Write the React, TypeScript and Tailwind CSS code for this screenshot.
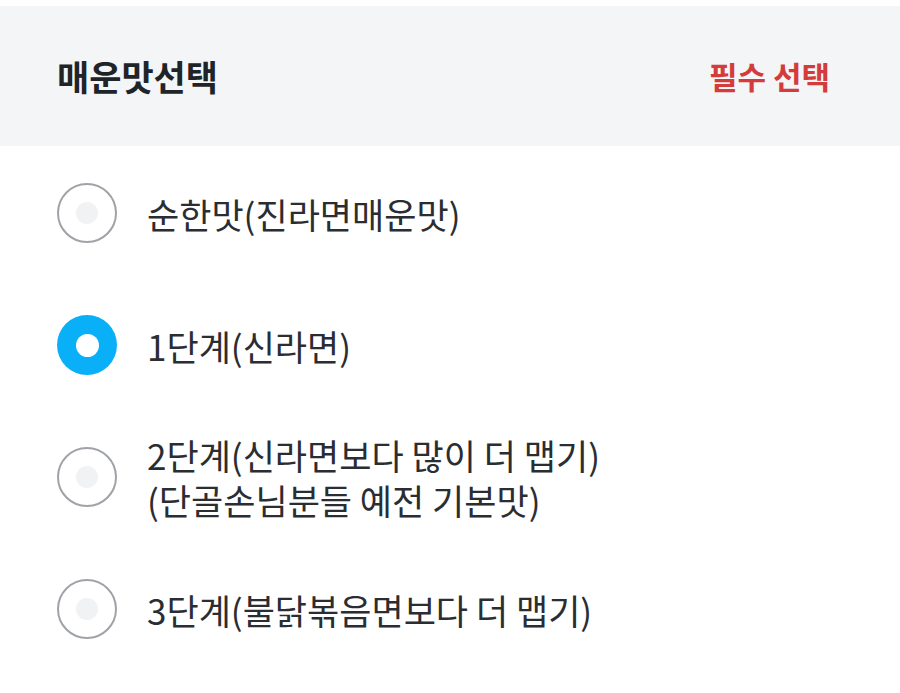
import React from "react";

const options = [
  { lines: ["순한맛(진라면매운맛)"], selected: false },
  { lines: ["1단계(신라면)"], selected: true },
  { lines: ["2단계(신라면보다 많이 더 맵기)", "(단골손님분들 예전 기본맛)"], selected: false },
  { lines: ["3단계(불닭볶음면보다 더 맵기)"], selected: false },
];

function Radio({ selected }: { selected: boolean }) {
  if (selected) {
    return (
      <div className="w-[60px] h-[60px] rounded-full bg-[#0ab0f7] flex items-center justify-center shrink-0">
        <div className="w-[23px] h-[23px] rounded-full bg-white" />
      </div>
    );
  }
  return (
    <div className="w-[60px] h-[60px] rounded-full border-2 border-[#9fa3a7] bg-white flex items-center justify-center shrink-0">
      <div className="w-[22px] h-[22px] rounded-full bg-[#f1f2f4]" />
    </div>
  );
}

export default function App() {
  return (
    <div
      className="w-[900px] h-[693px] bg-white overflow-hidden"
      style={{ fontFamily: '"Noto Sans CJK KR", "Noto Sans", sans-serif' }}
    >
      <div className="h-[6px]" />
      <div className="h-[140px] bg-[#f3f5f7] flex items-center justify-between pl-[57px] pr-[70px]">
        <span className="text-[35px] font-bold text-[#1f2429]">매운맛선택</span>
        <span className="text-[31px] font-bold text-[#d43c3c]">필수 선택</span>
      </div>
      <div className="h-px" />
      <div className="flex flex-col">
        {options.map((o, i) => (
          <div key={i} className="h-[132px] flex items-center pl-[57px] gap-[30px]">
            <Radio selected={o.selected} />
            <div className="text-[35px] leading-[45px] text-[#2a2d31]">
              {o.lines.map((l, j) => (
                <div key={j}>{l}</div>
              ))}
            </div>
          </div>
        ))}
      </div>
    </div>
  );
}
